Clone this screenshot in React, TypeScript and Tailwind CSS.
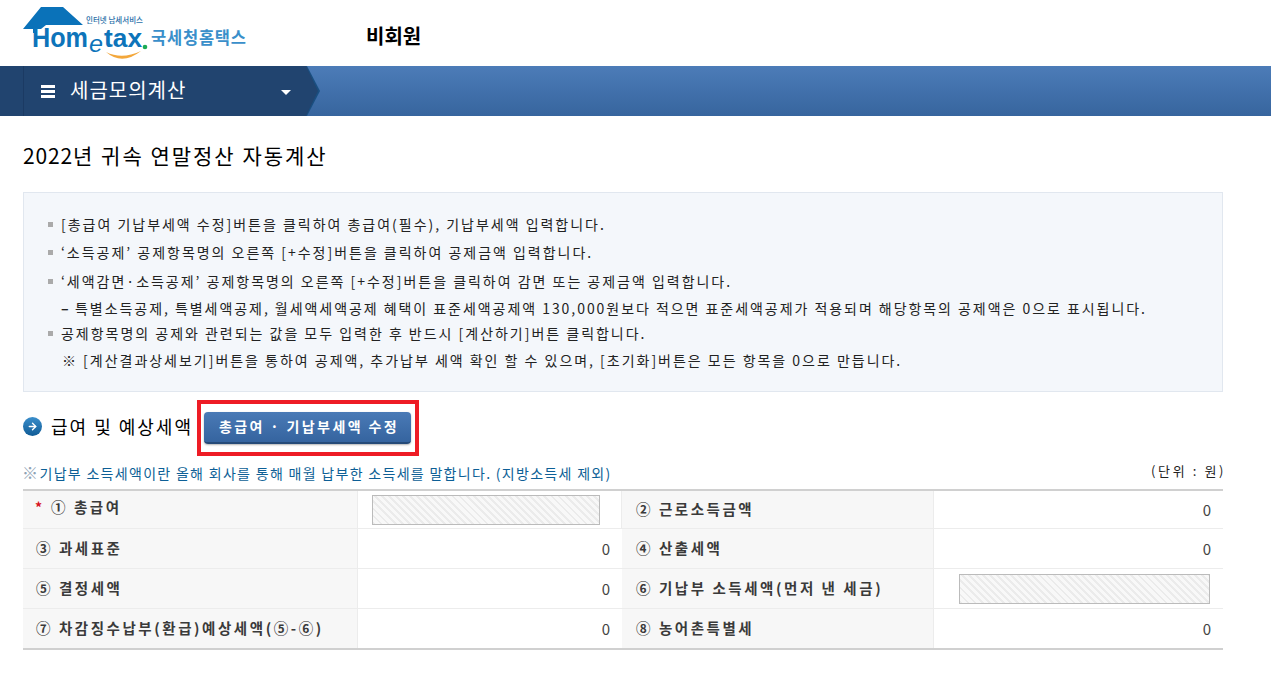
import { ArrowRight } from "lucide-react";

const KR = "font-['Noto_Sans_CJK_KR','Noto_Sans',sans-serif]";

function Logo() {
  return (
    <svg width="250" height="66" viewBox="0 0 250 66" className="block">
      <path d="M41 7H63L83 25H46L41 29H37V33H33V29H23Z" fill="#0a72b9" />
      <text x="32" y="47" fontFamily="'Liberation Sans',sans-serif" fontWeight="700" fontSize="27" fill="#0d74ba" textLength="56" lengthAdjust="spacingAndGlyphs">Hom</text>
      <text x="89" y="52" fontFamily="'Liberation Sans',sans-serif" fontStyle="italic" fontSize="23" fill="#0d74ba" textLength="14" lengthAdjust="spacingAndGlyphs">e</text>
      <text x="104" y="47" fontFamily="'Liberation Sans',sans-serif" fontWeight="700" fontSize="26" fill="#0d74ba" textLength="38" lengthAdjust="spacingAndGlyphs">tax</text>
      <circle cx="145" cy="47" r="2.3" fill="#1bab55" />
      <path d="M106 52Q122 66 141 51Q122 60 106 52Z" fill="#f3a73b" />
      <text x="86" y="23" fontFamily="'Noto Sans CJK KR',sans-serif" fontSize="7.5" fontWeight="500" fill="#2a6fa8" textLength="57">인터넷 납세서비스</text>
      <text x="151" y="44" fontFamily="'Noto Sans CJK KR',sans-serif" fontWeight="700" fontSize="16.5" fill="#3a8fca" textLength="95">국세청홈택스</text>
    </svg>
  );
}

const notes: { text: string; bullet: boolean }[] = [
  { text: "[총급여 기납부세액 수정]버튼을 클릭하여 총급여(필수), 기납부세액 입력합니다.", bullet: true },
  { text: "‘소득공제’ 공제항목명의 오른쪽 [+수정]버튼을 클릭하여 공제금액 입력합니다.", bullet: true },
  { text: "‘세액감면·소득공제’ 공제항목명의 오른쪽 [+수정]버튼을 클릭하여 감면 또는 공제금액 입력합니다.", bullet: true },
  { text: "특별소득공제, 특별세액공제, 월세액세액공제 혜택이 표준세액공제액 130,000원보다 적으면 표준세액공제가 적용되며 해당항목의 공제액은 0으로 표시됩니다.", bullet: false },
  { text: "공제항목명의 공제와 관련되는 값을 모두 입력한 후 반드시 [계산하기]버튼 클릭합니다.", bullet: true },
  { text: "※ [계산결과상세보기]버튼을 통하여 공제액, 추가납부 세액 확인 할 수 있으며, [초기화]버튼은 모든 항목을 0으로 만듭니다.", bullet: false },
];

const noteTops = ["mt-[21px]", "mt-[8px]", "mt-[9px]", "mt-[7px]", "mt-[5px]", "mt-[7px]"];

function Hatch({ className }: { className: string }) {
  return (
    <div className={`h-[30px] border border-[#bbbbbb] bg-[repeating-linear-gradient(45deg,#ebebeb_0,#ebebeb_2px,#f8f8f8_2px,#f8f8f8_5px)] ${className}`} />
  );
}

function Label({ children, star, right }: { children: string; star?: boolean; right?: boolean }) {
  return (
    <div className="flex items-center bg-[#f7f7f7] border-r border-[#ececec]">
      <div className={`flex items-center text-[14.5px] font-semibold text-[#3a3a3a] tracking-[2.55px] ${star ? "pl-[12px] pb-[5px]" : "pb-[2px]"} ${right ? "pl-[14px]" : star ? "" : "pl-[13px]"}`}>
        {star && <span className="w-[16px] text-[#d8121d] text-[14px] font-bold tracking-normal">*</span>}
        <span>{children}</span>
      </div>
    </div>
  );
}

function Value() {
  return <div className="flex items-center justify-end pr-[12px] pt-[2px] text-[15px] text-[#444444]">0</div>;
}

export default function App() {
  return (
    <div className={`${KR} w-[1271px] h-[683px] overflow-hidden bg-white text-black`}>
      <header className="flex h-[66px] items-start">
        <div className="w-[366px]"><Logo /></div>
        <div className="pt-[22px] text-[20px] font-bold leading-[28px]">비회원</div>
      </header>

      <nav className="relative h-[50px] bg-gradient-to-b from-[#4c7cb8] to-[#37659e]">
        <div className="flex h-full w-[320px] bg-[#1a4f80] [clip-path:polygon(0_0,307px_0,320px_50%,307px_100%,0_100%)]">
          <div className="flex h-full w-[319px] bg-[#21446f] [clip-path:polygon(0_0,306px_0,318px_50%,306px_100%,0_100%)]">
            <div className="w-[24px] h-full border-r border-[#1b3a63]" />
            <div className="flex items-center h-full pl-[17px] text-white">
              <div className="flex flex-col gap-[2px] w-[14px]">
                <span className="h-[3px] bg-white" />
                <span className="h-[3px] bg-white" />
                <span className="h-[3px] bg-white" />
              </div>
              <span className="ml-[15px] text-[20px] leading-[28px] tracking-[1px] pb-[2px]">세금모의계산</span>
              <span className="ml-[95px] mt-[3px] w-0 h-0 border-x-[5px] border-x-transparent border-t-[5px] border-t-white" />
            </div>
          </div>
        </div>
      </nav>

      <main className="ml-[23px] w-[1200px]">
        <h1 className="mt-[24px] h-[30px] text-[21px] leading-[30px] font-normal tracking-[2px] text-black"><span className="tracking-[0.85px]">2022</span>년 귀속 연말정산 자동계산</h1>

        <section className="mt-[22px] h-[200px] bg-[#f4f7fb] border border-[#e1e7ef] pl-[24px]">
          {notes.map((n, i) => (
            <div key={i} className={`flex items-center h-[20px] text-[14px] text-[#222222] ${i === 3 ? "tracking-[1.95px]" : "tracking-[1.98px]"} ${noteTops[i]}`}>
              <span className={`mr-[8px] w-[5px] h-[5px] ${n.bullet ? "bg-[#aaaaaa]" : "bg-transparent"}`} />
              {i === 3 && <span className="w-[14px] font-bold tracking-normal">–</span>}
              <span className={n.bullet || i === 3 ? "" : "pl-[1px]"}>{n.text}</span>
            </div>
          ))}
        </section>

        <section className="mt-[8px] flex items-center h-[56px]">
          <span className="flex items-center justify-center w-[19px] h-[19px] rounded-full bg-gradient-to-b from-[#3a8ecb] to-[#0f5c96] text-white mb-[4px]">
            <ArrowRight size={11} strokeWidth={3} />
          </span>
          <h2 className="ml-[9px] w-[146px] text-[18px] font-normal tracking-[2px] leading-[26px] mb-[4px] whitespace-nowrap">급여 및 예상세액</h2>
          <div className="border-[4px] border-[#ee1c25] w-[222px] h-[56px] flex items-center pl-[3px]">
            <button className="w-[207px] h-[32px] pl-[3px] pb-[2px] rounded-[4px] bg-gradient-to-b from-[#4a7ab6] to-[#35649f] border-b-[2px] border-[#254a78] text-white text-[14px] font-bold tracking-[2.4px] shadow-[0_1px_2px_rgba(0,0,0,0.3)]">총급여 · 기납부세액 수정</button>
          </div>
        </section>

        <div className="flex justify-between h-[33px] pt-[5px]">
          <div className="text-[14px] leading-[22px] tracking-[1.3px] text-[#0d5f96] -ml-[1px]"><span className="text-[16px] text-[#8fa3b5] tracking-normal -mr-[3px]">※</span> 기납부 소득세액이란 올해 회사를 통해 매월 납부한 소득세를 말합니다. (지방소득세 제외)</div>
          <div className="pt-[1px] -mr-[3px] text-[13px] leading-[18px] tracking-[2.6px] text-[#222222]">(단위 : 원)</div>
        </div>

        <div className="grid grid-cols-[335px_264px_312px_289px] grid-rows-[37px_40px_40px_40px] border-y-2 border-[#d0d0d0] [&>*:nth-child(n+5)]:border-t [&>*:nth-child(n+5)]:border-[#ececec]">
          <Label star>① 총급여</Label>
          <div className="flex items-center pl-[14px] border-r border-[#ececec]"><Hatch className="w-[228px]" /></div>
          <Label right>② 근로소득금액</Label>
          <Value />
          <Label>③ 과세표준</Label>
          <Value />
          <Label right>④ 산출세액</Label>
          <Value />
          <Label>⑤ 결정세액</Label>
          <Value />
          <Label right>⑥ 기납부 소득세액(먼저 낸 세금)</Label>
          <div className="flex items-center justify-end pr-[13px]"><Hatch className="w-[251px]" /></div>
          <Label>⑦ 차감징수납부(환급)예상세액(⑤-⑥)</Label>
          <Value />
          <Label right>⑧ 농어촌특별세</Label>
          <Value />
        </div>
      </main>
    </div>
  );
}
